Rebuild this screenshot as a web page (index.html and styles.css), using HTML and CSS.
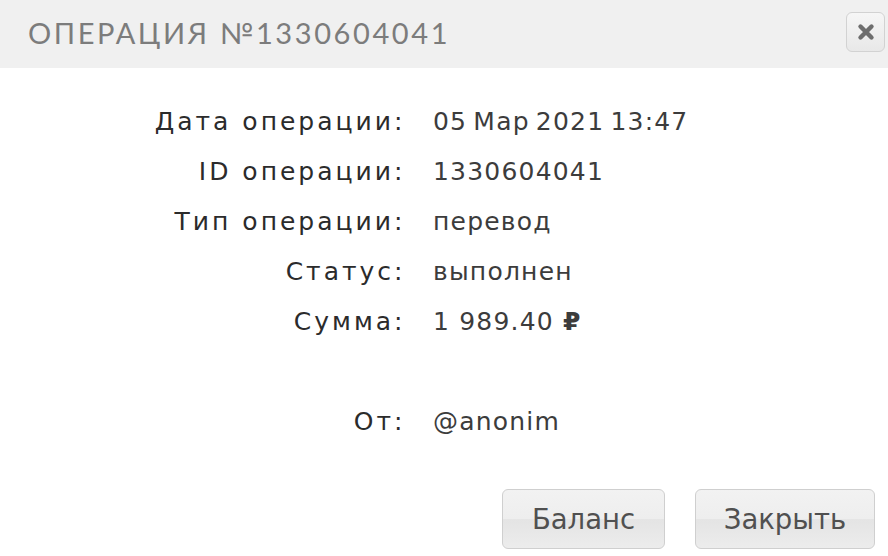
FILE: index.html
```html
<!DOCTYPE html>
<html lang="ru">
<head>
<meta charset="utf-8">
<title>Операция</title>
<link rel="stylesheet" href="styles.css">
</head>
<body>
<div class="dialog">
  <div class="header">
    <div class="title">ОПЕРАЦИЯ №1330604041</div>
    <button class="close" aria-label="Закрыть">
      <svg width="18" height="18" viewBox="0 0 18 18"><path d="M3.5 3.5 L14.5 14.5 M14.5 3.5 L3.5 14.5" stroke="#6e6e6e" stroke-width="4.4" stroke-linecap="round"/></svg>
    </button>
  </div>
  <div class="content">
    <div class="details">
      <div class="label">Дата операции:</div><div class="value date">05 Мар 2021 13:47</div>
      <div class="label">ID операции:</div><div class="value">1330604041</div>
      <div class="label">Тип операции:</div><div class="value">перевод</div>
      <div class="label">Статус:</div><div class="value">выполнен</div>
      <div class="label">Сумма:</div><div class="value">1 989.40 <span class="rub">₽</span></div>
      <div class="spacer"></div>
      <div class="label">От:</div><div class="value">@anonim</div>
    </div>
    <div class="buttons">
      <button class="btn btn-balance">Баланс</button>
      <button class="btn btn-close">Закрыть</button>
    </div>
  </div>
</div>
</body>
</html>
```
FILE: styles.css
```css
html, body {
  margin: 0;
  padding: 0;
  background: #ffffff;
}
.dialog {
  width: 888px;
  height: 556px;
  display: flex;
  flex-direction: column;
  font-family: "DejaVu Sans", sans-serif;
}
.header {
  height: 68px;
  background: #f0f0f0;
  display: flex;
  align-items: center;
  justify-content: space-between;
  padding: 0 3px 0 28px;
  box-sizing: border-box;
}
.title {
  font-family: "Lato", sans-serif;
  font-size: 29px;
  letter-spacing: 2.6px;
  color: #7c7c7c;
  margin-bottom: 4px;
}
.close {
  width: 39px;
  height: 40px;
  margin-bottom: 4px;
  border: 1px solid #d2d2d2;
  border-radius: 6px;
  background: linear-gradient(#f6f6f6, #e8e8e8);
  display: flex;
  align-items: center;
  justify-content: center;
  padding: 0;
}
.content {
  flex: 1;
  display: flex;
  flex-direction: column;
}
.details {
  display: grid;
  grid-template-columns: 405px 1fr;
  column-gap: 28px;
  row-gap: 0;
  padding-top: 29px;
  font-size: 25px;
  line-height: 50px;
  color: #333;
}
.label {
  text-align: right;
  color: #2b2b2b;
  letter-spacing: 3px;
  margin-right: -0.5px;
}
.value {
  color: #3c3c3c;
  letter-spacing: 1.2px;
}
.date {
  word-spacing: -3px;
}
.rub {
  font-weight: bold;
}
.spacer {
  grid-column: 1 / 3;
  height: 50px;
}
.buttons {
  display: flex;
  justify-content: flex-end;
  gap: 30px;
  padding: 42px 13px 0 0;
}
.btn {
  height: 60px;
  border: 1px solid #cfcfcf;
  border-radius: 6px;
  background: linear-gradient(#f2f2f2 0%, #eeeeee 50%, #e4e4e4 51%, #ececec 100%);
  font-family: "DejaVu Sans", sans-serif;
  font-size: 27.5px;
  color: #505050;
  padding: 0;
}
.btn-balance { width: 163px; }
.btn-close { width: 180px; }
```
